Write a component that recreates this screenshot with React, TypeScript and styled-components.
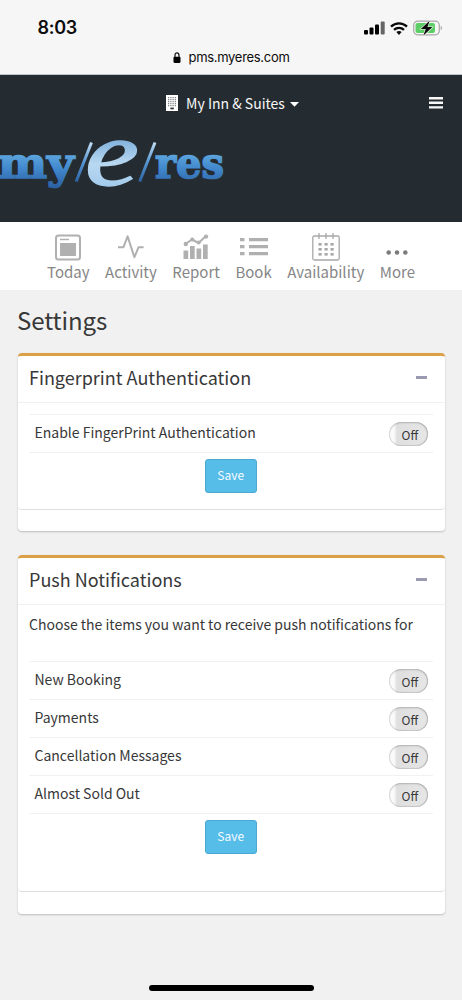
import React from "react";
import styled, { createGlobalStyle } from "styled-components";

const GlobalStyle = createGlobalStyle`
  * { box-sizing: border-box; }
  body {
    margin: 0;
    background: #f1f1f1;
    font-family: "Noto Sans CJK SC", "Noto Sans", sans-serif;
    color: #383838;
  }
`;

const Screen = styled.div`
  width: 462px;
  height: 1000px;
  display: flex;
  flex-direction: column;
  overflow: hidden;
  background: #f1f1f1;
`;

const BrowserBar = styled.div`
  flex: none;
  height: 75px;
  background: #f6f6f6;
  border-bottom: 1px solid #bcc7d0;
  font-family: Inter, sans-serif;
  color: #0c0c0c;
`;

const StatusRow = styled.div`
  display: flex;
  justify-content: space-between;
  align-items: center;
  height: 39px;
  padding: 17px 19px 0 37.5px;
`;

const Clock = styled.span`
  font-size: 18px;
  font-weight: 600;
  line-height: 22px;
  letter-spacing: -0.3px;
`;

const StatusIcons = styled.div`
  display: flex;
  align-items: center;
  height: 22px;
`;

const AddressRow = styled.div`
  display: flex;
  align-items: center;
  justify-content: center;
  gap: 7px;
  height: 36px;
  padding-left: 1px;
  font-size: 13px;
  letter-spacing: -0.3px;
`;

const SiteHeader = styled.header`
  flex: none;
  height: 147px;
  background: #252c31;
  color: #f7f7f7;
`;

const HeaderTop = styled.div`
  display: grid;
  grid-template-columns: 1fr auto 1fr;
  align-items: center;
  height: 56px;
  padding: 0 19px 0 22px;
`;

const HotelPicker = styled.div`
  grid-column: 2;
  display: flex;
  align-items: center;
  gap: 8px;
  font-size: 14px;
  line-height: 20px;
  white-space: nowrap;
`;

const MenuButton = styled.button`
  justify-self: end;
  display: flex;
  padding: 0;
  border: 0;
  background: none;
`;

const Nav = styled.nav`
  flex: none;
  display: flex;
  justify-content: center;
  gap: 15.5px;
  height: 68px;
  padding-top: 10px;
  background: #fff;
`;

const NavItem = styled.a`
  display: flex;
  flex-direction: column;
  align-items: center;
  color: #868686;
  font-size: 15px;
  line-height: 20px;
  white-space: nowrap;
  svg { display: block; height: 30px; }
`;

const Main = styled.main`
  padding: 18px 17.5px 0;
`;

const PageTitle = styled.h1`
  margin: -1px 0 20px -0.5px;
  height: 26px;
  font-size: 24px;
  line-height: 26px;
  font-weight: 400;
  letter-spacing: -0.1px;
  white-space: nowrap;
`;

const Card = styled.section<{ $h: number }>`
  height: ${(p) => p.$h}px;
  margin: 0 0 24px;
  background: #fff;
  border-top: 3px solid #dca047;
  border-radius: 4px;
  box-shadow: 0 1px 2px rgba(0, 0, 0, 0.22);
`;

const CardInner = styled.div<{ $h: number }>`
  height: ${(p) => p.$h}px;
  border-bottom: 1px solid #dedede;
  border-radius: 0 0 4px 4px;
`;

const CardHeader = styled.div`
  display: flex;
  justify-content: space-between;
  align-items: center;
  height: 47px;
  padding: 0 18px 4px 11.5px;
  border-bottom: 1px solid #f1f1f1;
`;

const CardTitle = styled.h2`
  margin: 0;
  font-size: 18px;
  line-height: 24px;
  font-weight: 400;
  white-space: nowrap;
`;

const Collapse = styled.span`
  width: 11px;
  height: 3px;
  background: #9a9bb0;
`;

const CardBody = styled.div`
  padding: 11px 12px 0 11.5px;
`;

const Intro = styled.p`
  margin: -2px 0 27px;
  height: 20px;
  font-size: 14px;
  line-height: 20px;
  white-space: nowrap;
`;

const Rows = styled.div`
  border-top: 1px solid #f1f1f1;
`;

const Row = styled.div`
  display: flex;
  justify-content: space-between;
  height: 38px;
  padding: 7px 5px 0 5.5px;
  border-bottom: 1px solid #f1f1f1;
  font-size: 14px;
  line-height: 20px;
  white-space: nowrap;
`;

const Toggle = styled.span`
  width: 39px;
  height: 24px;
  padding-left: 13px;
  border-radius: 12px;
  background: linear-gradient(90deg, #fafafa 0 5px, #dfdfdf 8px, #e6e6e6);
  box-shadow: inset 0 1px 2px rgba(0, 0, 0, 0.2), inset 0 -1px 1px rgba(0, 0, 0, 0.1),
    inset -1px 0 1px rgba(0, 0, 0, 0.16), inset 1px 0 1px rgba(0, 0, 0, 0.06);
  font-size: 12px;
  line-height: 26px;
`;

const SaveButton = styled.button`
  display: block;
  width: 52px;
  height: 34px;
  margin: 6px auto 0;
  padding: 0 0 3px;
  border: 1px solid #4aa9d2;
  border-radius: 3px;
  background: #56bce8;
  color: #f5fbff;
  font: inherit;
  font-size: 12px;
  line-height: 28px;
`;

const HomeBar = styled.div`
  flex: none;
  width: 165px;
  height: 6px;
  margin: auto auto 9px 148.5px;
  border-radius: 3px;
  background: #000;
`;

const LogoSvg = styled.svg`
  display: block;
  overflow: visible;
`;

const Logo = () => (
  <LogoSvg width="240" height="80" viewBox="0 0 240 80">
    <defs>
      <linearGradient id="word" gradientUnits="userSpaceOnUse" x1="0" y1="22" x2="0" y2="56">
        <stop offset="0" stopColor="#5fa8df" />
        <stop offset="0.45" stopColor="#4288cd" />
        <stop offset="1" stopColor="#2c62a5" />
      </linearGradient>
      <linearGradient id="slash" gradientUnits="userSpaceOnUse" x1="0" y1="11" x2="0" y2="51">
        <stop offset="0" stopColor="#c3dff4" />
        <stop offset="0.5" stopColor="#5696d2" />
        <stop offset="1" stopColor="#2c62a5" />
      </linearGradient>
      <linearGradient id="script" gradientUnits="userSpaceOnUse" x1="0" y1="11" x2="0" y2="55">
        <stop offset="0" stopColor="#86b5de" />
        <stop offset="0.5" stopColor="#b9d8f1" />
        <stop offset="1" stopColor="#a4cbed" />
      </linearGradient>
    </defs>
    <g fill="url(#word)" stroke="url(#word)" strokeWidth="1.6" fontFamily="DejaVu Serif" fontWeight="700" fontSize="42">
      <text x="-2" y="47" textLength="76" lengthAdjust="spacingAndGlyphs">my</text>
      <text x="155" y="47" textLength="69" lengthAdjust="spacingAndGlyphs">res</text>
    </g>
    <g fill="none" stroke="url(#slash)" strokeWidth="3">
      <path d="M76.2 50.5L91.5 11.5" />
      <path d="M139.7 50.5L155 11.5" />
    </g>
    <text x="85" y="54" fontFamily="Liberation Serif" fontStyle="italic" fontSize="94" fill="url(#script)" stroke="url(#script)" strokeWidth="1.4" textLength="54" lengthAdjust="spacingAndGlyphs">e</text>
  </LogoSvg>
);

const Bars = () => (
  <svg width="21" height="14" viewBox="0 0 21 14">
    <rect x="0" y="9" width="4" height="4.5" rx="1" />
    <rect x="5.5" y="6.5" width="4" height="7" rx="1" />
    <rect x="11" y="3.5" width="4" height="10" rx="1" />
    <rect x="16.7" y="0.5" width="4" height="13" rx="1" fill="#666" />
  </svg>
);

const Wifi = () => (
  <svg width="18" height="13" viewBox="0 0 18 13" fill="none" stroke="#0a0a0a" strokeWidth="2.3" style={{ marginLeft: 5 }}>
    <path d="M1 4.6C5.5 0.3 12.5 0.3 17 4.6" />
    <path d="M4 7.8C6.8 5.2 11.2 5.2 14 7.8" />
    <path d="M6.4 10.1C7.9 8.7 10.1 8.7 11.6 10.1L9 12.9Z" fill="#0a0a0a" stroke="none" />
  </svg>
);

const Battery = () => (
  <svg width="30" height="18" viewBox="0 0 30 18" style={{ marginLeft: 5 }}>
    <rect x="0.7" y="2.2" width="25.6" height="13.6" rx="4" fill="none" stroke="#a8a8a8" strokeWidth="1.2" />
    <path d="M27.7 7v4.2c1.9-.7 1.9-3.5 0-4.2z" fill="#a8a8a8" />
    <rect x="2.5" y="4" width="19.5" height="10" rx="2.2" fill="#5cce65" />
    <path d="M16.8 1.6L7.8 10h5l-2.6 6.8 9.2-8.8h-5z" fill="#0a0a0a" stroke="#f6f6f6" strokeWidth="1.2" paintOrder="stroke" />
  </svg>
);

const Lock = () => (
  <svg width="8" height="11" viewBox="0 0 8 11">
    <rect x="0.5" y="4.7" width="7" height="6.2" rx="1.1" />
    <path d="M2 5.3V3.2C2 0.1 6 0.1 6 3.2V5.3" fill="none" stroke="#0c0c0c" strokeWidth="1.2" />
  </svg>
);

const Building = () => (
  <svg width="12" height="16" viewBox="0 0 12 16">
    <path d="M0 0h12v16H0z" fill="#fff" />
    {[2.2, 4.2, 6.2, 8.2, 10.2].map((y) =>
      [2.2, 4.4, 6.6, 8.8].map((x) => <rect key={`${x}-${y}`} x={x} y={y} width="1" height="1" fill="#3c4348" />)
    )}
    <path d="M4.4 12.6h3.4v1.7H4.4z" fill="#252c31" />
  </svg>
);

const Caret = () => (
  <svg width="9" height="5" viewBox="0 0 9 5" fill="#fff" style={{ marginLeft: -3, marginTop: 2 }}>
    <path d="M0 0h9L4.5 4.7z" />
  </svg>
);

const TodayIcon = () => (
  <svg width="26" height="30" viewBox="0 0 26 30" fill="none">
    <rect x="1" y="3.5" width="24" height="24" rx="2.5" stroke="#b0b0b0" strokeWidth="2" />
    <path d="M5 7.5h9" stroke="#b0b0b0" strokeWidth="1.5" />
    <path d="M5 11h16v13H5z" fill="#b0b0b0" />
  </svg>
);

const ActivityIcon = () => (
  <svg width="26" height="30" viewBox="0 0 26 30" fill="none" stroke="#b0b0b0" strokeWidth="2" strokeLinejoin="round">
    <path d="M0 15.2h5.5L9.6 4.4l6.8 20.8 4.2-10h5" />
  </svg>
);

const ReportIcon = () => (
  <svg width="26" height="30" viewBox="0 0 26 30" fill="#b0b0b0">
    <path d="M0.5 18.5h4.7V27H0.5zM7 14h4.7v13H7zM13.5 16.5h4.7V27h-4.7zM20 12.5h4.7V27H20z" />
    <path d="M2.5 12L9 7.5l6.5 3.5L23 4" fill="none" stroke="#b0b0b0" strokeWidth="2" />
    <circle cx="2.8" cy="12" r="2.2" /><circle cx="9.2" cy="7.5" r="2" />
    <circle cx="15.7" cy="10.5" r="2" /><circle cx="23" cy="4.6" r="2.2" />
  </svg>
);

const BookIcon = () => (
  <svg width="28" height="30" viewBox="0 0 28 30" fill="#b0b0b0">
    {[6, 13, 20].map((y) => (
      <path key={y} d={`M0 ${y}h4.5v3.3H0zM9 ${y}h19v3.3H9z`} />
    ))}
  </svg>
);

const CalendarIcon = () => (
  <svg width="28" height="30" viewBox="0 0 28 30" fill="none" stroke="#a8a8a8" strokeWidth="1.3">
    <rect x="0.8" y="4" width="26.4" height="24" rx="1.5" />
    <path d="M7 1v6M14 1v6M21 1v6" />
    {[11, 16, 21].map((y) =>
      [6.5, 12.5, 18.5].map((x) => (
        <rect key={`${x}-${y}`} x={x} y={y} width="3.2" height="2.6" fill="#a8a8a8" stroke="none" />
      ))
    )}
  </svg>
);

const MoreIcon = () => (
  <svg width="22" height="30" viewBox="0 0 22 30" fill="#7c7c7c">
    <circle cx="2.7" cy="20.5" r="2.3" /><circle cx="11" cy="20.5" r="2.3" /><circle cx="19.3" cy="20.5" r="2.3" />
  </svg>
);

const navItems = [
  { label: "Today", Icon: TodayIcon },
  { label: "Activity", Icon: ActivityIcon },
  { label: "Report", Icon: ReportIcon },
  { label: "Book", Icon: BookIcon },
  { label: "Availability", Icon: CalendarIcon },
  { label: "More", Icon: MoreIcon },
];

const SettingRows = ({ labels }: { labels: string[] }) => (
  <Rows>
    {labels.map((label) => (
      <Row key={label}>
        {label}
        <Toggle>Off</Toggle>
      </Row>
    ))}
  </Rows>
);

export default function App() {
  return (
    <Screen>
      <GlobalStyle />
      <BrowserBar>
        <StatusRow>
          <Clock>8:03</Clock>
          <StatusIcons>
            <Bars />
            <Wifi />
            <Battery />
          </StatusIcons>
        </StatusRow>
        <AddressRow>
          <Lock />
          pms.myeres.com
        </AddressRow>
      </BrowserBar>
      <SiteHeader>
        <HeaderTop>
          <HotelPicker>
            <Building />
            My Inn &amp; Suites
            <Caret />
          </HotelPicker>
          <MenuButton aria-label="Menu">
            <svg width="14" height="12" viewBox="0 0 14 12" fill="#f7f7f7">
              <path d="M0 0h14v2.4H0zM0 4.6h14V7H0zM0 9.2h14v2.4H0z" />
            </svg>
          </MenuButton>
        </HeaderTop>
        <Logo />
      </SiteHeader>
      <Nav>
        {navItems.map(({ label, Icon }) => (
          <NavItem key={label}>
            <Icon />
            {label}
          </NavItem>
        ))}
      </Nav>
      <Main>
        <PageTitle>Settings</PageTitle>
        <Card $h={178}>
          <CardInner $h={154}>
            <CardHeader>
              <CardTitle>Fingerprint Authentication</CardTitle>
              <Collapse />
            </CardHeader>
            <CardBody>
              <SettingRows labels={["Enable FingerPrint Authentication"]} />
              <SaveButton>Save</SaveButton>
            </CardBody>
          </CardInner>
        </Card>
        <Card $h={359}>
          <CardInner $h={334}>
            <CardHeader>
              <CardTitle>Push Notifications</CardTitle>
              <Collapse />
            </CardHeader>
            <CardBody>
              <Intro>Choose the items you want to receive push notifications for</Intro>
              <SettingRows labels={["New Booking", "Payments", "Cancellation Messages", "Almost Sold Out"]} />
              <SaveButton>Save</SaveButton>
            </CardBody>
          </CardInner>
        </Card>
      </Main>
      <HomeBar />
    </Screen>
  );
}
